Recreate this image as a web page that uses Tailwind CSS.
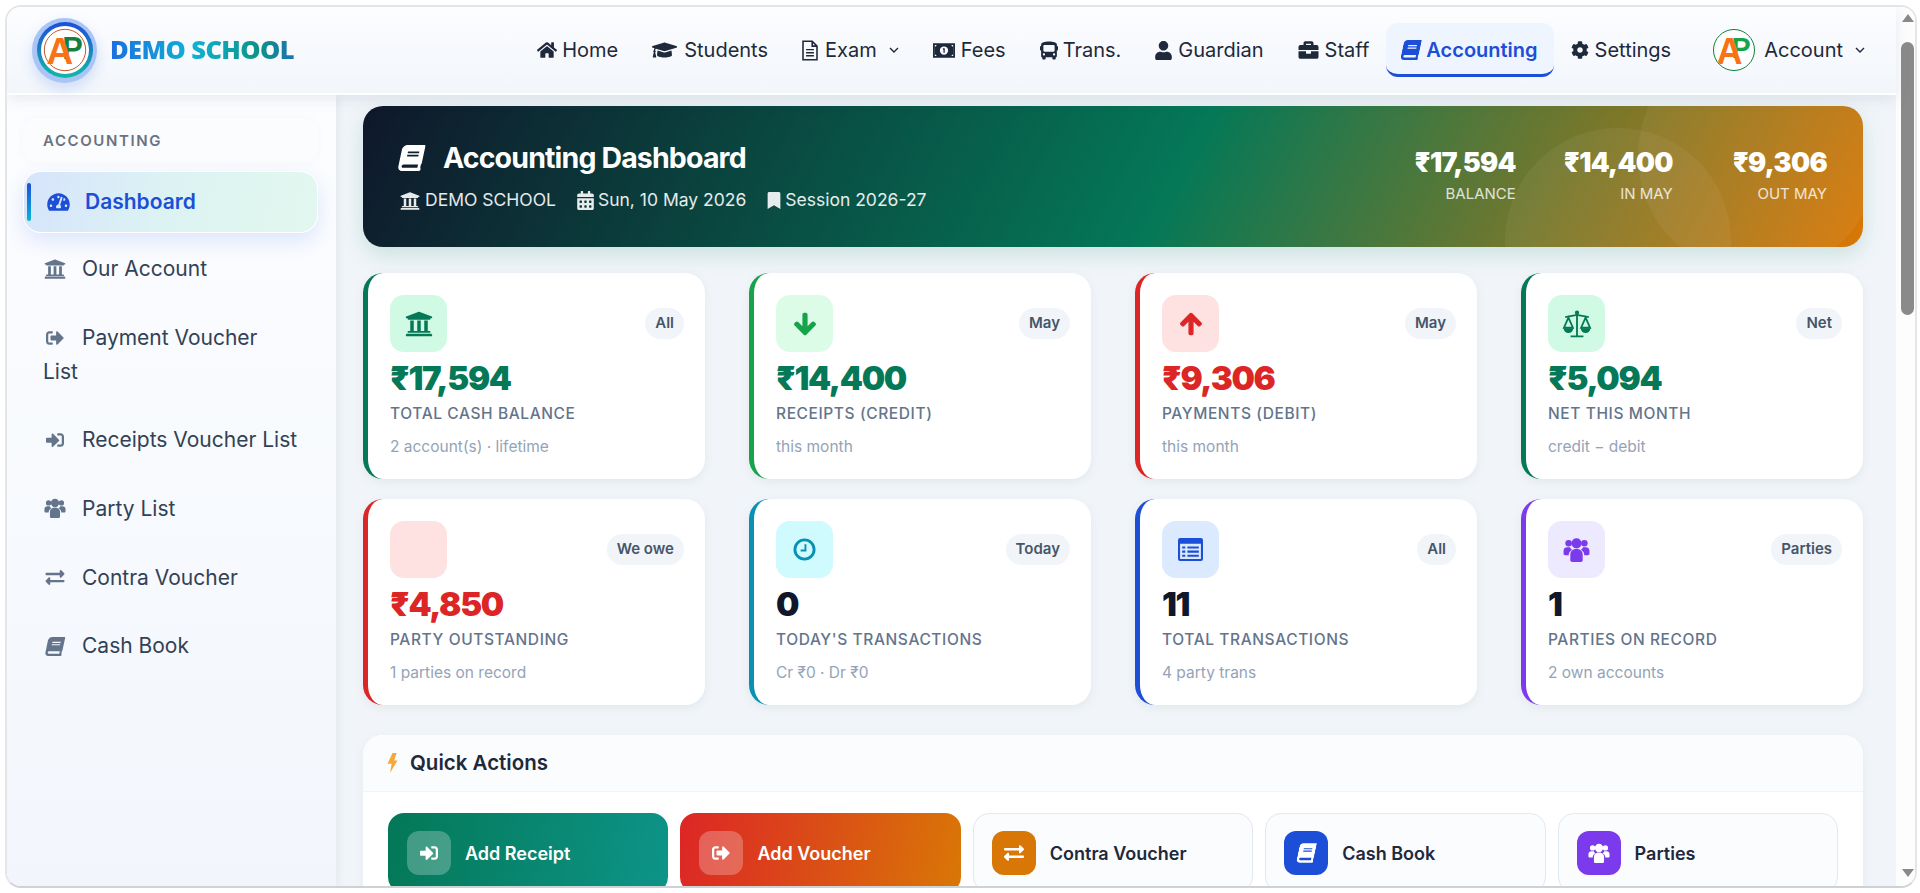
<!DOCTYPE html>
<html lang="en">
<head>
    <meta charset="UTF-8">
    <meta name="viewport" content="width=device-width, initial-scale=1.0">
    <title>Accounting Dashboard</title>
    <script src="https://cdn.jsdelivr.net/npm/@tailwindcss/browser@4"></script>
</head>
<body class="bg-white h-screen overflow-hidden font-['Inter',sans-serif] text-[#1e293b]">
    <!-- icon sprite -->
    <svg class="hidden">
        <symbol id="i-home" viewBox="0 0 576 512"><path fill="currentColor" d="M280.37 148.26L96 300.11V464a16 16 0 0 0 16 16l112.06-.29a16 16 0 0 0 15.92-16V368a16 16 0 0 1 16-16h64a16 16 0 0 1 16 16v95.64a16 16 0 0 0 16 16.05L464 480a16 16 0 0 0 16-16V300L295.67 148.26a12.19 12.19 0 0 0-15.3 0zM571.6 251.47L488 182.56V44.05a12 12 0 0 0-12-12h-56a12 12 0 0 0-12 12v72.61L318.47 43a48 48 0 0 0-61 0L4.34 251.47a12 12 0 0 0-1.6 16.9l25.5 31A12 12 0 0 0 45.15 301l235.22-193.74a12.19 12.19 0 0 1 15.3 0L530.9 301a12 12 0 0 0 16.9-1.6l25.5-31a12 12 0 0 0-1.7-16.93z"/></symbol>
        <symbol id="i-cap" viewBox="0 0 640 512"><path fill="currentColor" d="M622.34 153.2L343.4 67.5c-15.2-4.67-31.6-4.67-46.79 0L17.66 153.2c-23.54 7.23-23.54 38.36 0 45.59l48.63 14.94c-10.67 13.19-17.23 29.28-17.88 46.9C38.78 266.15 32 276.11 32 288c0 10.78 5.68 19.85 13.86 25.65L20.33 428.53C18.11 438.52 25.71 448 35.94 448h56.11c10.24 0 17.84-9.48 15.62-19.47L82.14 313.65C90.32 307.85 96 298.78 96 288c0-11.57-6.47-21.25-15.66-26.87.76-15.02 8.44-28.3 20.69-36.72L296.6 284.5c9.06 2.78 26.44 6.25 46.79 0l278.95-85.7c23.55-7.24 23.55-38.36 0-45.6zM352.79 315.09c-28.53 8.76-52.84 3.92-65.59 0l-145.02-44.55L128 384c0 35.35 85.96 64 192 64s192-28.65 192-64l-14.18-113.47-145.03 44.56z"/></symbol>
        <symbol id="i-file" viewBox="0 0 20 24"><path fill="none" stroke="currentColor" stroke-width="1.8" d="M2 1.5h10.5l5.5 5.5v15.5H2zM12.5 1.5V7H18"/><path fill="none" stroke="currentColor" stroke-width="1.6" d="M5.5 11h9M5.5 14.5h9M5.5 18h9"/></symbol>
        <symbol id="i-money" viewBox="0 0 24 18"><path fill="currentColor" fill-rule="evenodd" d="M0 1h24v16H0zM2 3v12h20V3z"/><path fill="currentColor" fill-rule="evenodd" d="M4 3h16a3 3 0 0 0 2 2v8a3 3 0 0 0-2 2H4a3 3 0 0 0-2-2V5a3 3 0 0 0 2-2zM12 4.5a4.5 4.5 0 1 0 0 9a4.5 4.5 0 0 0 0-9z"/><path fill="currentColor" d="M10.8 6.5h2v5h-1.4V8h-.6z"/></symbol>
        <symbol id="i-bus" viewBox="0 0 512 512"><path fill="currentColor" d="M488 128h-8V80c0-44.8-99.2-80-224-80S32 35.2 32 80v48h-8c-13.25 0-24 10.74-24 24v80c0 13.25 10.75 24 24 24h8v160c0 17.67 14.33 32 32 32v32c0 17.67 14.33 32 32 32h32c17.67 0 32-14.33 32-32v-32h192v32c0 17.67 14.33 32 32 32h32c17.67 0 32-14.33 32-32v-32h6.4c16 0 25.6-12.8 25.6-25.6V256h8c13.25 0 24-10.75 24-24v-80c0-13.26-10.75-24-24-24zM112 400c-17.67 0-32-14.33-32-32s14.33-32 32-32 32 14.33 32 32-14.33 32-32 32zm16-112c-17.67 0-32-14.33-32-32V128c0-17.67 14.33-32 32-32h256c17.67 0 32 14.33 32 32v128c0 17.67-14.33 32-32 32H128zm272 112c-17.67 0-32-14.33-32-32s14.33-32 32-32 32 14.33 32 32-14.33 32-32 32z"/></symbol>
        <symbol id="i-user" viewBox="0 0 448 512"><path fill="currentColor" d="M224 256c70.7 0 128-57.3 128-128S294.7 0 224 0 96 57.3 96 128s57.3 128 128 128zm89.6 32h-16.7c-22.2 10.2-46.9 16-72.9 16s-50.6-5.8-72.9-16h-16.7C60.2 288 0 348.2 0 422.4V464c0 26.5 21.5 48 48 48h352c26.5 0 48-21.5 48-48v-41.6c0-74.2-60.2-134.4-134.4-134.4z"/></symbol>
        <symbol id="i-case" viewBox="0 0 512 512"><path fill="currentColor" d="M320 336c0 8.84-7.16 16-16 16h-96c-8.84 0-16-7.16-16-16v-48H0v144c0 25.6 22.4 48 48 48h416c25.6 0 48-22.4 48-48V288H320v48zm144-208h-80V80c0-25.6-22.4-48-48-48H176c-25.6 0-48 22.4-48 48v48H48c-25.6 0-48 22.4-48 48v80h512v-80c0-25.6-22.4-48-48-48zm-144 0H192V96h128v32z"/></symbol>
        <symbol id="i-book" viewBox="0 0 448 512"><path fill="currentColor" d="M448 360V24c0-13.3-10.7-24-24-24H96C43 0 0 43 0 96v320c0 53 43 96 96 96h328c13.3 0 24-10.7 24-24v-16c0-7.5-3.5-14.3-8.9-18.7-4.2-15.4-4.2-59.3 0-74.7 5.4-4.3 8.9-11.1 8.9-18.6zM128 134c0-3.3 2.7-6 6-6h212c3.3 0 6 2.7 6 6v20c0 3.3-2.7 6-6 6H134c-3.3 0-6-2.7-6-6v-20zm0 64c0-3.3 2.7-6 6-6h212c3.3 0 6 2.7 6 6v20c0 3.3-2.7 6-6 6H134c-3.3 0-6-2.7-6-6v-20zm253.4 250H96c-17.7 0-32-14.3-32-32 0-17.6 14.4-32 32-32h285.4c-1.9 17.1-1.9 46.9 0 64z"/></symbol>
        <symbol id="i-cog" viewBox="0 0 512 512"><path fill="currentColor" d="M487.4 315.7l-42.6-24.6c4.3-23.2 4.3-47 0-70.2l42.6-24.6c4.9-2.8 7.1-8.6 5.5-14-11.1-35.6-30-67.8-54.7-94.6-3.8-4.1-10-5.1-14.8-2.3L380.8 110c-17.9-15.4-38.5-27.3-60.8-35.1V25.8c0-5.6-3.9-10.5-9.4-11.7-36.7-8.2-74.3-7.8-109.2 0-5.5 1.2-9.4 6.1-9.4 11.7V75c-22.2 7.9-42.8 19.8-60.8 35.1L88.7 85.5c-4.9-2.8-11-1.9-14.8 2.3-24.7 26.7-43.6 58.9-54.7 94.6-1.7 5.4.6 11.2 5.5 14L67.3 221c-4.3 23.2-4.3 47 0 70.2l-42.6 24.6c-4.9 2.8-7.1 8.6-5.5 14 11.1 35.6 30 67.8 54.7 94.6 3.8 4.1 10 5.1 14.8 2.3l42.6-24.6c17.9 15.4 38.5 27.3 60.8 35.1v49.2c0 5.6 3.9 10.5 9.4 11.7 36.7 8.2 74.3 7.8 109.2 0 5.5-1.2 9.4-6.1 9.4-11.7v-49.2c22.2-7.9 42.8-19.8 60.8-35.1l42.6 24.6c4.9 2.8 11 1.9 14.8-2.3 24.7-26.7 43.6-58.9 54.7-94.6 1.5-5.5-.7-11.3-5.6-14.1zM256 336c-44.1 0-80-35.9-80-80s35.9-80 80-80 80 35.9 80 80-35.9 80-80 80z"/></symbol>
        <symbol id="i-bank" viewBox="0 0 512 512"><path fill="currentColor" d="M496 128v16a8 8 0 0 1-8 8h-24v12c0 6.627-5.373 12-12 12H60c-6.627 0-12-5.373-12-12v-12H24a8 8 0 0 1-8-8v-16a8 8 0 0 1 4.941-7.392l232-88a7.996 7.996 0 0 1 6.118 0l232 88A8 8 0 0 1 496 128zm-24 304H40c-13.255 0-24 10.745-24 24v16a8 8 0 0 0 8 8h464a8 8 0 0 0 8-8v-16c0-13.255-10.745-24-24-24zM96 192v192H60c-6.627 0-12 5.373-12 12v20h416v-20c0-6.627-5.373-12-12-12h-36V192h-64v192h-64V192h-64v192h-64V192H96z"/></symbol>
        <symbol id="i-cal" viewBox="0 0 448 512"><path fill="currentColor" d="M0 464c0 26.5 21.5 48 48 48h352c26.5 0 48-21.5 48-48V192H0v272zm320-196c0-6.6 5.4-12 12-12h40c6.6 0 12 5.4 12 12v40c0 6.6-5.4 12-12 12h-40c-6.6 0-12-5.4-12-12v-40zm0 128c0-6.6 5.4-12 12-12h40c6.6 0 12 5.4 12 12v40c0 6.6-5.4 12-12 12h-40c-6.6 0-12-5.4-12-12v-40zM192 268c0-6.6 5.4-12 12-12h40c6.6 0 12 5.4 12 12v40c0 6.6-5.4 12-12 12h-40c-6.6 0-12-5.4-12-12v-40zm0 128c0-6.6 5.4-12 12-12h40c6.6 0 12 5.4 12 12v40c0 6.6-5.4 12-12 12h-40c-6.6 0-12-5.4-12-12v-40zM64 268c0-6.6 5.4-12 12-12h40c6.6 0 12 5.4 12 12v40c0 6.6-5.4 12-12 12H76c-6.6 0-12-5.4-12-12v-40zm0 128c0-6.6 5.4-12 12-12h40c6.6 0 12 5.4 12 12v40c0 6.6-5.4 12-12 12H76c-6.6 0-12-5.4-12-12v-40zM400 64h-48V16c0-8.8-7.2-16-16-16h-32c-8.8 0-16 7.2-16 16v48H160V16c0-8.8-7.2-16-16-16h-32c-8.8 0-16 7.2-16 16v48H48C21.5 64 0 85.5 0 112v48h448v-48c0-26.5-21.5-48-48-48z"/></symbol>
        <symbol id="i-mark" viewBox="0 0 384 512"><path fill="currentColor" d="M0 512V48C0 21.49 21.49 0 48 0h288c26.51 0 48 21.49 48 48v464L192 400 0 512z"/></symbol>
        <symbol id="i-gauge" viewBox="0 0 576 512"><path fill="currentColor" d="M288 32C128.94 32 0 160.94 0 320c0 52.8 14.25 102.26 39.06 144.8 5.61 9.62 16.3 15.2 27.44 15.2h443c11.14 0 21.83-5.58 27.44-15.2C561.75 422.26 576 372.8 576 320c0-159.06-128.94-288-288-288zm0 64c14.71 0 26.58 10.13 30.32 23.65-1.11 2.26-2.64 4.23-3.45 6.67l-9.22 27.67c-5.13 3.49-10.97 6.01-17.64 6.01-17.67 0-32-14.33-32-32S270.33 96 288 96zM96 384c-17.67 0-32-14.33-32-32s14.33-32 32-32 32 14.33 32 32-14.33 32-32 32zm48-160c-17.67 0-32-14.33-32-32s14.33-32 32-32 32 14.33 32 32-14.33 32-32 32zm246.77-72.41l-61.33 184C343.13 347.33 352 364.54 352 384c0 11.72-3.38 22.55-8.88 32H232.88c-5.5-9.45-8.88-20.28-8.88-32 0-33.94 26.5-61.43 59.9-63.59l61.34-184.01c4.17-12.56 17.73-19.45 30.36-15.17 12.57 4.19 19.35 17.79 15.17 30.36zm14.66 57.2l15.52-46.55c3.47-1.29 7.13-2.23 11.05-2.23 17.67 0 32 14.33 32 32s-14.33 32-32 32c-11.38-.01-20.89-6.27-26.57-15.22zM480 384c-17.67 0-32-14.33-32-32s14.33-32 32-32 32 14.33 32 32-14.33 32-32 32z"/></symbol>
        <symbol id="i-out" viewBox="0 0 512 512"><path fill="currentColor" d="M497 273L329 441c-15 15-41 4.5-41-17v-96H152c-13.3 0-24-10.7-24-24v-96c0-13.3 10.7-24 24-24h136V88c0-21.4 25.9-32 41-17l168 168c9.3 9.4 9.3 24.6 0 34zM192 436v-40c0-6.6-5.4-12-12-12H96c-17.7 0-32-14.3-32-32V160c0-17.7 14.3-32 32-32h84c6.6 0 12-5.4 12-12V76c0-6.6-5.4-12-12-12H96c-53 0-96 43-96 96v192c0 53 43 96 96 96h84c6.6 0 12-5.4 12-12z"/></symbol>
        <symbol id="i-in" viewBox="0 0 512 512"><path fill="currentColor" d="M416 448h-84c-6.6 0-12-5.4-12-12v-40c0-6.6 5.4-12 12-12h84c17.7 0 32-14.3 32-32V160c0-17.7-14.3-32-32-32h-84c-6.6 0-12-5.4-12-12V76c0-6.6 5.4-12 12-12h84c53 0 96 43 96 96v192c0 53-43 96-96 96zm-47-201L201 79c-15-15-41-4.5-41 17v96H24c-13.3 0-24 10.7-24 24v96c0 13.3 10.7 24 24 24h136v96c0 21.5 26 32 41 17l168-168c9.3-9.4 9.3-24.6 0-34z"/></symbol>
        <symbol id="i-users" viewBox="0 0 24 24"><g fill="currentColor"><circle cx="5" cy="6.5" r="2.9"/><circle cx="19" cy="6.5" r="2.9"/><circle cx="12" cy="6.5" r="4.5"/><path d="M6.5 21.5v-5.2c0-3 2.4-4.8 5.5-4.8s5.5 1.8 5.5 4.8v5.2c0 1-.8 1.5-1.6 1.5H8.1c-.8 0-1.6-.5-1.6-1.5z"/><path d="M0.5 13c0-2 1.6-3 3.2-3h2.6c.4 1.4 1.2 1.8 2 2.3-2.2 1-3.2 2.6-3.2 4.7H2c-.9 0-1.5-.6-1.5-1.5z"/><path d="M23.5 13c0-2-1.6-3-3.2-3h-2.6c-.4 1.4-1.2 1.8-2 2.3 2.2 1 3.2 2.6 3.2 4.7H22c.9 0 1.5-.6 1.5-1.5z"/></g></symbol>
        <symbol id="i-swap" viewBox="0 0 512 512"><path fill="currentColor" d="M0 168v-16c0-13.255 10.745-24 24-24h360V80c0-21.367 25.899-32.042 40.971-16.971l80 80c9.372 9.373 9.372 24.569 0 33.941l-80 80C409.956 271.982 384 261.456 384 240v-48H24c-13.255 0-24-10.745-24-24zm488 152H128v-48c0-21.314-25.862-32.08-40.971-16.971l-80 80c-9.372 9.373-9.372 24.569 0 33.941l80 80C102.057 463.997 128 453.437 128 432v-48h360c13.255 0 24-10.745 24-24v-16c0-13.255-10.745-24-24-24z"/></symbol>
        <symbol id="i-down" viewBox="0 0 448 512"><path fill="currentColor" stroke="currentColor" stroke-width="30" d="M413.1 222.5l22.2 22.2c9.4 9.4 9.4 24.6 0 33.9L241 473c-9.4 9.4-24.6 9.4-33.9 0L12.7 278.6c-9.4-9.4-9.4-24.6 0-33.9l22.2-22.2c9.5-9.5 25-9.3 34.3.4L184 343.4V56c0-13.3 10.7-24 24-24h32c13.3 0 24 10.7 24 24v287.4l114.8-120.5c9.3-9.8 24.8-10 34.3-.4z"/></symbol>
        <symbol id="i-up" viewBox="0 0 448 512"><path fill="currentColor" stroke="currentColor" stroke-width="30" d="M34.9 289.5l-22.2-22.2c-9.4-9.4-9.4-24.6 0-33.9L207 39c9.4-9.4 24.6-9.4 33.9 0l194.3 194.3c9.4 9.4 9.4 24.6 0 33.9L413 289.4c-9.5 9.5-25 9.3-34.3-.4L264 168.6V456c0 13.3-10.7 24-24 24h-32c-13.3 0-24-10.7-24-24V168.6L69.2 289.1c-9.3 9.8-24.8 10-34.3.4z"/></symbol>
        <symbol id="i-scale" viewBox="0 0 28 28"><g fill="none" stroke="currentColor" stroke-width="1.7"><path d="M14 4v21M8 25.5h12M3 7.5l11-2 11 2"/><path d="M6 8L1.8 17.5h8.4zM22 8l-4.2 9.5h8.4z"/></g><path fill="currentColor" d="M1.5 18h9a4.5 4.5 0 0 1-9 0zM17.5 18h9a4.5 4.5 0 0 1-9 0z"/><circle cx="14" cy="3.5" r="2" fill="currentColor"/></symbol>
        <symbol id="i-clock" viewBox="0 0 24 24"><circle cx="12" cy="12" r="10" fill="none" stroke="currentColor" stroke-width="3"/><path fill="none" stroke="currentColor" stroke-width="2" d="M13 6.5v6.5H8"/></symbol>
        <symbol id="i-list" viewBox="0 0 24 22"><path fill="currentColor" fill-rule="evenodd" d="M2 0h20a2 2 0 0 1 2 2v18a2 2 0 0 1-2 2H2a2 2 0 0 1-2-2V2a2 2 0 0 1 2-2zM2 5.5V20h20V5.5zM4 8h3v2H4zM9 8h11v2H9zM4 12h3v2H4zM9 12h11v2H9zM4 16h3v2H4zM9 16h11v2H9z"/></symbol>
        <symbol id="i-bolt" viewBox="0 0 12 24"><path fill="currentColor" d="M6 0h5L8 9h4L3 24l2-11H0z"/></symbol>
        <symbol id="i-chev" viewBox="0 0 12 12"><path fill="none" stroke="currentColor" stroke-width="1.4" d="M2 4l4 4 4-4"/></symbol>
    </svg>

    <div class="mt-[5px] ml-[5px] w-[1912px] h-[883px] flex bg-white border-2 border-[#e3e6e8] border-b-[#cfd2d4] rounded-[16px] overflow-hidden">
        <div class="flex-1 min-w-0 flex flex-col">

            <!-- top bar -->
            <header class="h-[88px] shrink-0 relative z-10 flex items-center pl-[25px] bg-[linear-gradient(180deg,#fcfdff,#f2f6fb)] border-b-2 border-white shadow-[0_4px_14px_rgba(100,116,139,0.14)]">
                <div class="w-[65px] h-[65px] rounded-full bg-[#a9c5f5] flex items-center justify-center shadow-[0_6px_14px_rgba(37,99,235,0.18)]">
                    <div class="w-[56px] h-[56px] rounded-full bg-[linear-gradient(180deg,#1d4ed8,#14b8a6)] p-[4px]">
                        <div class="w-full h-full rounded-full bg-white flex items-center justify-center">
                            <svg class="w-[44px] h-[44px]" viewBox="0 0 100 100">
                                <circle cx="50" cy="50" r="47" fill="none" stroke="#c2410c" stroke-width="2"/>
                                <text x="44" y="70" font-family="Liberation Sans" font-weight="700" font-size="70" fill="#15803d">P</text>
                                <text x="8" y="82" font-family="Liberation Sans" font-weight="700" font-size="84" fill="#f97316">A</text>
                            </svg>
                        </div>
                    </div>
                </div>
                <span class="ml-[13px] text-[25.5px] leading-none font-black tracking-[-0.6px] font-['Open_Sans',sans-serif] bg-[linear-gradient(90deg,#1d6ee0,#0fb2d4_45%,#0d9488_80%,#1b74b0)] bg-clip-text text-transparent">DEMO SCHOOL</span>

                <nav class="ml-auto flex items-center text-[20px] text-[#1e293b]">
                    <a class="flex items-center gap-[5px] px-[17px] h-[54px]"><svg class="w-[20px] h-[18px]"><use href="#i-home"/></svg>Home</a>
                    <a class="flex items-center gap-[7px] px-[17px] h-[54px]"><svg class="w-[25px] h-[20px]"><use href="#i-cap"/></svg>Students</a>
                    <a class="flex items-center gap-[6px] px-[16px] h-[54px]"><svg class="w-[18px] h-[21px]"><use href="#i-file"/></svg>Exam<svg class="w-[12px] h-[12px] ml-[5px]"><use href="#i-chev"/></svg></a>
                    <a class="flex items-center gap-[6px] px-[17px] h-[54px]"><svg class="w-[22px] h-[17px]"><use href="#i-money"/></svg>Fees</a>
                    <a class="flex items-center gap-[5px] px-[17px] h-[54px]"><svg class="w-[18px] h-[21px]"><use href="#i-bus"/></svg>Trans.</a>
                    <a class="flex items-center gap-[6px] px-[17px] h-[54px]"><svg class="w-[17px] h-[19px]"><use href="#i-user"/></svg>Guardian</a>
                    <a class="flex items-center gap-[6px] px-[17px] h-[54px]"><svg class="w-[21px] h-[20px]"><use href="#i-case"/></svg>Staff</a>
                    <a class="flex items-center gap-[6px] px-[16px] pt-[3px] h-[54px] rounded-[12px] bg-[#eff5fe] border-b-[3px] border-[#1d4ed8] text-[#1d4ed8] font-semibold"><svg class="w-[18px] h-[20px] -skew-x-12"><use href="#i-book"/></svg>Accounting</a>
                    <a class="flex items-center gap-[6px] px-[17px] h-[54px]"><svg class="w-[18px] h-[18px]"><use href="#i-cog"/></svg>Settings</a>
                </nav>
                <div class="ml-[25px] mr-[30px] flex items-center text-[20px]">
                    <div class="w-[42px] h-[42px] rounded-full bg-white border border-[#15803d] overflow-hidden">
                        <svg class="w-full h-full" viewBox="0 0 100 100">
                            <text x="44" y="70" font-family="Liberation Sans" font-weight="700" font-size="72" fill="#16a34a">P</text>
                            <text x="6" y="84" font-family="Liberation Sans" font-weight="700" font-size="90" fill="#f97316">A</text>
                        </svg>
                    </div>
                    <span class="ml-[9px]">Account</span>
                    <svg class="w-[12px] h-[12px] ml-[11px]"><use href="#i-chev"/></svg>
                </div>
            </header>

            <div class="flex-1 min-h-0 flex">
                <!-- side menu -->
                <aside class="w-[329px] shrink-0 relative bg-[linear-gradient(180deg,#fcfdff,#f2f6fc)] pt-[23px] pl-[16px] pr-[18px] shadow-[2px_0_8px_rgba(100,116,139,0.1)] text-[21px] leading-[34px] text-[#334155]">
                    <div class="h-[45px] pl-[20px] flex items-center rounded-[14px] bg-[#fbfcfe] shadow-[0_0_6px_rgba(148,163,184,0.08)] text-[15px] font-semibold tracking-[1.6px] text-[#6b7280]">ACCOUNTING</div>
                    <a class="relative mt-[8px] h-[62px] flex items-center pl-[23px] rounded-[18px] bg-[linear-gradient(100deg,#d6e4fb,#dcf3f3_50%,#e2f7ee)] border border-white shadow-[0_8px_20px_rgba(37,99,235,0.14)] text-[#1d4ed8] font-semibold">
                        <span class="absolute left-[3px] top-[11px] w-[4px] h-[38px] rounded-full bg-[linear-gradient(180deg,#1d4ed8,#06b6d4)]"></span>
                        <svg class="w-[23px] h-[20px] mr-[15px]"><use href="#i-gauge"/></svg>Dashboard
                    </a>
                    <div class="mt-[2px]">
                        <a class="block px-[20px] py-[17.3px]"><svg class="inline-block w-[24px] h-[22px] mr-[15px] -mt-[4px] text-[#64748b]"><use href="#i-bank"/></svg>Our Account</a>
                        <a class="block px-[20px] py-[17.3px]"><svg class="inline-block w-[24px] h-[18px] mr-[15px] -mt-[3px] text-[#64748b]"><use href="#i-out"/></svg>Payment Voucher<br>List</a>
                        <a class="block px-[20px] py-[17.3px]"><svg class="inline-block w-[24px] h-[18px] mr-[15px] -mt-[3px] text-[#64748b]"><use href="#i-in"/></svg>Receipts Voucher List</a>
                        <a class="block px-[20px] py-[17.3px]"><svg class="inline-block w-[24px] h-[22px] mr-[15px] -mt-[4px] text-[#64748b]"><use href="#i-users"/></svg>Party List</a>
                        <a class="block px-[20px] py-[17.3px]"><svg class="inline-block w-[24px] h-[19px] mr-[15px] -mt-[3px] text-[#64748b]"><use href="#i-swap"/></svg>Contra Voucher</a>
                        <a class="block px-[20px] py-[17.3px]"><svg class="inline-block w-[24px] h-[19px] mr-[15px] -mt-[3px] -skew-x-12 text-[#64748b]"><use href="#i-book"/></svg>Cash Book</a>
                    </div>
                </aside>

                <main class="flex-1 min-w-0 overflow-hidden bg-[#f1f5f9] pt-[11px] pl-[27px] pr-[33px]">
                    <!-- banner -->
                    <section class="relative h-[141px] overflow-hidden rounded-[20px] bg-[linear-gradient(118deg,#0f172a_0%,#047857_54%,#d97706_100%)] shadow-[0_8px_22px_rgba(4,120,87,0.16)] flex items-center justify-between pl-[36px] pr-[36px] text-white">
                        <span class="absolute left-[1142px] top-[22px] w-[226px] h-[226px] rounded-full bg-white/5"></span>
                        <span class="absolute left-[1275px] top-[-70px] w-[240px] h-[240px] rounded-full bg-white/5"></span>
                        <div class="relative">
                            <h1 class="flex items-center text-[28.5px] leading-[38px] font-bold tracking-[-0.85px]"><svg class="w-[25px] h-[26px] mr-[19px] -skew-x-12"><use href="#i-book"/></svg>Accounting Dashboard</h1>
                            <div class="mt-[10px] flex items-center text-[17.5px] text-white/90">
                                <svg class="w-[22px] h-[20px] mr-[4px]"><use href="#i-bank"/></svg>DEMO SCHOOL
                                <svg class="w-[17px] h-[19px] ml-[21px] mr-[4px]"><use href="#i-cal"/></svg>Sun, 10 May 2026
                                <svg class="w-[14px] h-[17px] ml-[21px] mr-[4px]"><use href="#i-mark"/></svg>Session 2026-27
                            </div>
                        </div>
                        <div class="relative -mt-[4px] flex gap-[48px] text-right">
                            <div><div class="text-[27px] leading-[34px] font-black tracking-[-0.7px]">₹17,594</div><div class="mt-[5px] text-[15px] leading-[18px] text-white/80">BALANCE</div></div>
                            <div><div class="text-[27px] leading-[34px] font-black tracking-[-0.7px]">₹14,400</div><div class="mt-[5px] text-[15px] leading-[18px] text-white/80">IN MAY</div></div>
                            <div class="ml-[12px]"><div class="text-[27px] leading-[34px] font-black tracking-[-0.7px]">₹9,306</div><div class="mt-[5px] text-[15px] leading-[18px] text-white/80">OUT MAY</div></div>
                        </div>
                    </section>

                    <!-- stat cards -->
                    <section class="mt-[26px] grid grid-cols-4 gap-x-[44px] gap-y-[20px]">
                        <div class="h-[206px] rounded-[20px] bg-white border-l-[5px] border-[#047857] pl-[22px] pr-[21px] pt-[22px] shadow-[0_3px_10px_rgba(100,116,139,0.1)]">
                            <div class="flex items-center justify-between"><span class="w-[57px] h-[57px] rounded-[14px] bg-[#d1fae5] text-[#047857] flex items-center justify-center"><svg class="w-[28px] h-[28px]"><use href="#i-bank"/></svg></span><span class="h-[31px] px-[10px] flex items-center rounded-full bg-[#f1f5f9] text-[15px] font-semibold text-[#475569]">All</span></div>
                            <div class="mt-[4px] text-[33px] leading-[44px] font-black tracking-[-1.3px] text-[#047857]">₹17,594</div>
                            <div class="mt-[3px] text-[15.5px] leading-[22px] font-medium tracking-[0.6px] text-[#64748b]">TOTAL CASH BALANCE</div>
                            <div class="mt-[11px] text-[15.5px] leading-[22px] text-[#94a3b8]">2 account(s) · lifetime</div>
                        </div>
                        <div class="h-[206px] rounded-[20px] bg-white border-l-[5px] border-[#16a34a] pl-[22px] pr-[21px] pt-[22px] shadow-[0_3px_10px_rgba(100,116,139,0.1)]">
                            <div class="flex items-center justify-between"><span class="w-[57px] h-[57px] rounded-[14px] bg-[#dcfce7] text-[#16a34a] flex items-center justify-center"><svg class="w-[22px] h-[24px]"><use href="#i-down"/></svg></span><span class="h-[31px] px-[10px] flex items-center rounded-full bg-[#f1f5f9] text-[15px] font-semibold text-[#475569]">May</span></div>
                            <div class="mt-[4px] text-[33px] leading-[44px] font-black tracking-[-1.3px] text-[#047857]">₹14,400</div>
                            <div class="mt-[3px] text-[15.5px] leading-[22px] font-medium tracking-[0.6px] text-[#64748b]">RECEIPTS (CREDIT)</div>
                            <div class="mt-[11px] text-[15.5px] leading-[22px] text-[#94a3b8]">this month</div>
                        </div>
                        <div class="h-[206px] rounded-[20px] bg-white border-l-[5px] border-[#dc2626] pl-[22px] pr-[21px] pt-[22px] shadow-[0_3px_10px_rgba(100,116,139,0.1)]">
                            <div class="flex items-center justify-between"><span class="w-[57px] h-[57px] rounded-[14px] bg-[#fee2e2] text-[#dc2626] flex items-center justify-center"><svg class="w-[22px] h-[24px]"><use href="#i-up"/></svg></span><span class="h-[31px] px-[10px] flex items-center rounded-full bg-[#f1f5f9] text-[15px] font-semibold text-[#475569]">May</span></div>
                            <div class="mt-[4px] text-[33px] leading-[44px] font-black tracking-[-1.3px] text-[#dc2626]">₹9,306</div>
                            <div class="mt-[3px] text-[15.5px] leading-[22px] font-medium tracking-[0.6px] text-[#64748b]">PAYMENTS (DEBIT)</div>
                            <div class="mt-[11px] text-[15.5px] leading-[22px] text-[#94a3b8]">this month</div>
                        </div>
                        <div class="h-[206px] rounded-[20px] bg-white border-l-[5px] border-[#047857] pl-[22px] pr-[21px] pt-[22px] shadow-[0_3px_10px_rgba(100,116,139,0.1)]">
                            <div class="flex items-center justify-between"><span class="w-[57px] h-[57px] rounded-[14px] bg-[#d1fae5] text-[#047857] flex items-center justify-center"><svg class="w-[30px] h-[30px]"><use href="#i-scale"/></svg></span><span class="h-[31px] px-[10px] flex items-center rounded-full bg-[#f1f5f9] text-[15px] font-semibold text-[#475569]">Net</span></div>
                            <div class="mt-[4px] text-[33px] leading-[44px] font-black tracking-[-1.3px] text-[#047857]">₹5,094</div>
                            <div class="mt-[3px] text-[15.5px] leading-[22px] font-medium tracking-[0.6px] text-[#64748b]">NET THIS MONTH</div>
                            <div class="mt-[11px] text-[15.5px] leading-[22px] text-[#94a3b8]">credit − debit</div>
                        </div>

                        <div class="h-[206px] rounded-[20px] bg-white border-l-[5px] border-[#dc2626] pl-[22px] pr-[21px] pt-[22px] shadow-[0_3px_10px_rgba(100,116,139,0.1)]">
                            <div class="flex items-center justify-between"><span class="w-[57px] h-[57px] rounded-[14px] bg-[#fee2e2]"></span><span class="h-[31px] px-[10px] flex items-center rounded-full bg-[#f1f5f9] text-[15px] font-semibold text-[#475569]">We owe</span></div>
                            <div class="mt-[4px] text-[33px] leading-[44px] font-black tracking-[-1.3px] text-[#dc2626]">₹4,850</div>
                            <div class="mt-[3px] text-[15.5px] leading-[22px] font-medium tracking-[0.6px] text-[#64748b]">PARTY OUTSTANDING</div>
                            <div class="mt-[11px] text-[15.5px] leading-[22px] text-[#94a3b8]">1 parties on record</div>
                        </div>
                        <div class="h-[206px] rounded-[20px] bg-white border-l-[5px] border-[#0891b2] pl-[22px] pr-[21px] pt-[22px] shadow-[0_3px_10px_rgba(100,116,139,0.1)]">
                            <div class="flex items-center justify-between"><span class="w-[57px] h-[57px] rounded-[14px] bg-[#cffafe] text-[#0891b2] flex items-center justify-center"><svg class="w-[23px] h-[23px]"><use href="#i-clock"/></svg></span><span class="h-[31px] px-[10px] flex items-center rounded-full bg-[#f1f5f9] text-[15px] font-semibold text-[#475569]">Today</span></div>
                            <div class="mt-[4px] text-[33px] leading-[44px] font-black tracking-[-1.3px] text-[#0f172a]">0</div>
                            <div class="mt-[3px] text-[15.5px] leading-[22px] font-medium tracking-[0.6px] text-[#64748b]">TODAY'S TRANSACTIONS</div>
                            <div class="mt-[11px] text-[15.5px] leading-[22px] text-[#94a3b8]">Cr ₹0 · Dr ₹0</div>
                        </div>
                        <div class="h-[206px] rounded-[20px] bg-white border-l-[5px] border-[#1d4ed8] pl-[22px] pr-[21px] pt-[22px] shadow-[0_3px_10px_rgba(100,116,139,0.1)]">
                            <div class="flex items-center justify-between"><span class="w-[57px] h-[57px] rounded-[14px] bg-[#dbeafe] text-[#1d4ed8] flex items-center justify-center"><svg class="w-[25px] h-[23px]"><use href="#i-list"/></svg></span><span class="h-[31px] px-[10px] flex items-center rounded-full bg-[#f1f5f9] text-[15px] font-semibold text-[#475569]">All</span></div>
                            <div class="mt-[4px] text-[33px] leading-[44px] font-black tracking-[-1.3px] text-[#0f172a]">11</div>
                            <div class="mt-[3px] text-[15.5px] leading-[22px] font-medium tracking-[0.6px] text-[#64748b]">TOTAL TRANSACTIONS</div>
                            <div class="mt-[11px] text-[15.5px] leading-[22px] text-[#94a3b8]">4 party trans</div>
                        </div>
                        <div class="h-[206px] rounded-[20px] bg-white border-l-[5px] border-[#7c3aed] pl-[22px] pr-[21px] pt-[22px] shadow-[0_3px_10px_rgba(100,116,139,0.1)]">
                            <div class="flex items-center justify-between"><span class="w-[57px] h-[57px] rounded-[14px] bg-[#ede9fe] text-[#7c3aed] flex items-center justify-center"><svg class="w-[27px] h-[27px]"><use href="#i-users"/></svg></span><span class="h-[31px] px-[10px] flex items-center rounded-full bg-[#f1f5f9] text-[15px] font-semibold text-[#475569]">Parties</span></div>
                            <div class="mt-[4px] text-[33px] leading-[44px] font-black tracking-[-1.3px] text-[#0f172a]">1</div>
                            <div class="mt-[3px] text-[15.5px] leading-[22px] font-medium tracking-[0.6px] text-[#64748b]">PARTIES ON RECORD</div>
                            <div class="mt-[11px] text-[15.5px] leading-[22px] text-[#94a3b8]">2 own accounts</div>
                        </div>
                    </section>

                    <!-- quick actions -->
                    <section class="mt-[30px] rounded-[20px] bg-white shadow-[0_3px_10px_rgba(100,116,139,0.08)]">
                        <div class="h-[57px] flex items-center pl-[24px] rounded-t-[20px] bg-[#fbfcfe] border-b border-[#f1f5f9] text-[20.5px] font-semibold text-[#1e293b]"><svg class="w-[11px] h-[20px] mr-[12px] text-[#f5a73a]"><use href="#i-bolt"/></svg>Quick Actions</div>
                        <div class="px-[25px] pt-[21px] pb-[20px] grid grid-cols-5 gap-[12px] text-[18px] font-semibold">
                            <a class="h-[80px] flex items-center gap-[14px] pl-[19px] rounded-[16px] bg-[linear-gradient(100deg,#047857,#0d9488)] text-white"><span class="w-[44px] h-[44px] rounded-[12px] bg-white/25 flex items-center justify-center"><svg class="w-[18px] h-[18px]"><use href="#i-in"/></svg></span>Add Receipt</a>
                            <a class="h-[80px] flex items-center gap-[14px] pl-[19px] rounded-[16px] bg-[linear-gradient(100deg,#dc2626,#d97706)] text-white"><span class="w-[44px] h-[44px] rounded-[12px] bg-white/25 flex items-center justify-center"><svg class="w-[18px] h-[18px]"><use href="#i-out"/></svg></span>Add Voucher</a>
                            <a class="h-[80px] flex items-center gap-[14px] pl-[18px] rounded-[16px] bg-[#fbfcfe] border border-[#e2e8f0] text-[#1e293b]"><span class="w-[44px] h-[44px] rounded-[12px] bg-[#d97706] text-white flex items-center justify-center"><svg class="w-[20px] h-[20px]"><use href="#i-swap"/></svg></span>Contra Voucher</a>
                            <a class="h-[80px] flex items-center gap-[14px] pl-[18px] rounded-[16px] bg-[#fbfcfe] border border-[#e2e8f0] text-[#1e293b]"><span class="w-[44px] h-[44px] rounded-[12px] bg-[#1d4ed8] text-white flex items-center justify-center"><svg class="w-[17px] h-[20px] -skew-x-12"><use href="#i-book"/></svg></span>Cash Book</a>
                            <a class="h-[80px] flex items-center gap-[14px] pl-[18px] rounded-[16px] bg-[#fbfcfe] border border-[#e2e8f0] text-[#1e293b]"><span class="w-[44px] h-[44px] rounded-[12px] bg-[#7c3aed] text-white flex items-center justify-center"><svg class="w-[22px] h-[22px]"><use href="#i-users"/></svg></span>Parties</a>
                        </div>
                    </section>
                </main>
            </div>
        </div>

        <!-- scrollbar -->
        <div class="w-[19px] shrink-0 bg-[#fdfdfe] flex flex-col items-center pl-[4px] pt-[7px] pb-[9px]">
            <span class="w-0 h-0 border-x-[6px] border-x-transparent border-b-[8px] border-b-[#8a8a8a]"></span>
            <span class="mt-[20px] w-[13px] h-[273px] rounded-full bg-[#8a8a8a]"></span>
            <span class="mt-auto w-0 h-0 border-x-[6px] border-x-transparent border-t-[8px] border-t-[#8a8a8a]"></span>
        </div>
    </div>
</body>
</html>
